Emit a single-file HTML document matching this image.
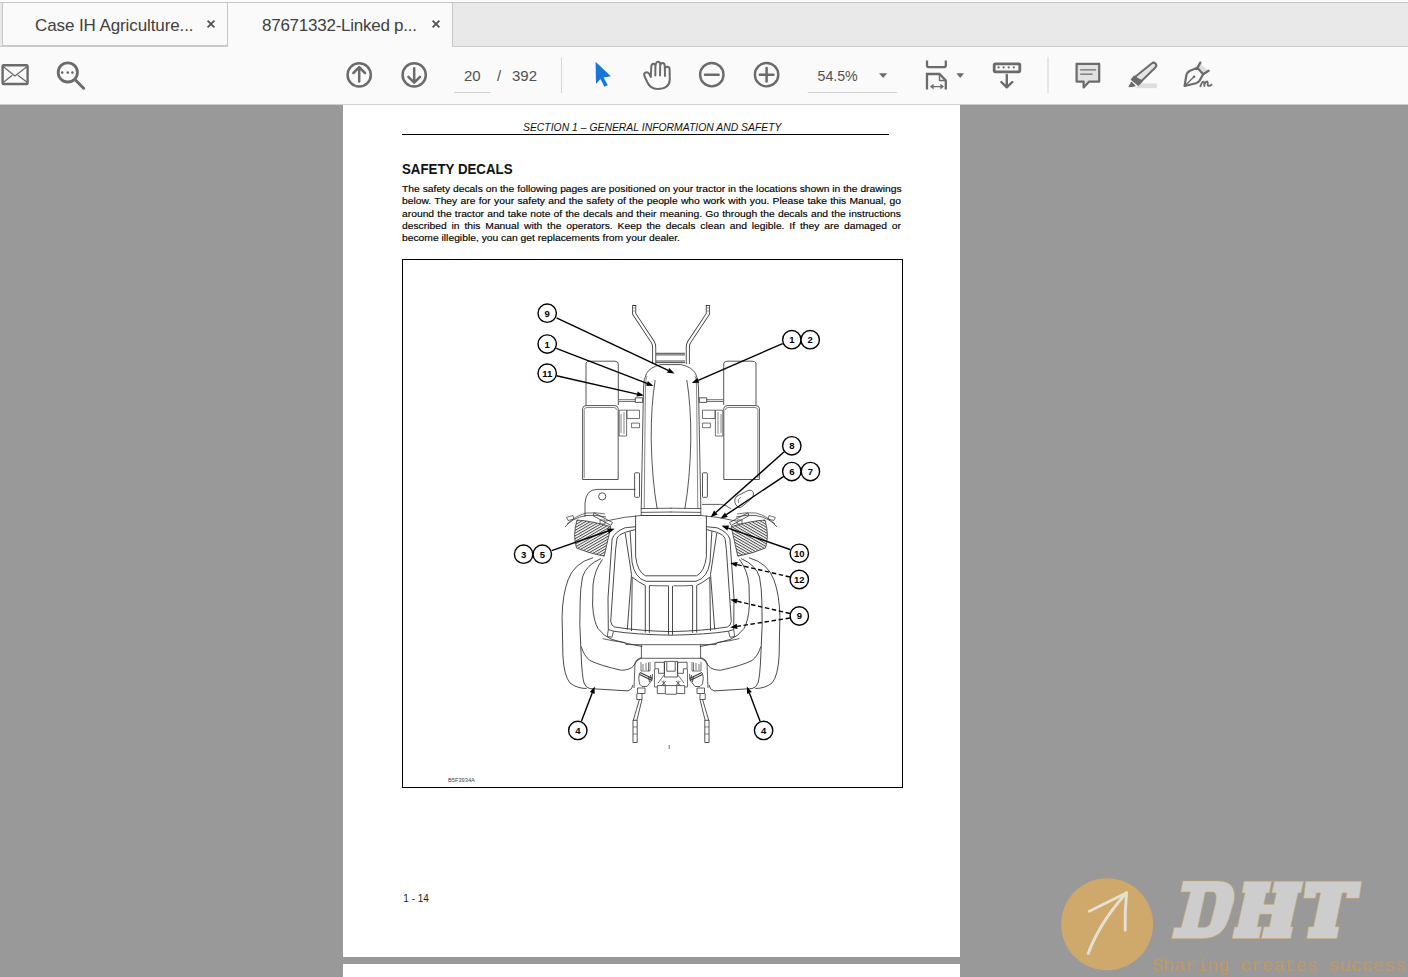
<!DOCTYPE html>
<html><head><meta charset="utf-8">
<style>
html,body{margin:0;padding:0;width:1408px;height:977px;overflow:hidden;background:#999999;font-family:"Liberation Sans",sans-serif;}
.abs{position:absolute;}
#tabbar{position:absolute;left:0;top:0;width:1408px;height:47px;background:#e9e9e9;}
#tabtop{position:absolute;left:0;top:0;width:1408px;height:2px;background:#fbfbfb;}
#tabline{position:absolute;left:0;top:2px;width:1408px;height:1px;background:#c6c6c6;}
#tabbot{position:absolute;left:0;top:46px;width:1408px;height:1px;background:#cccccc;}
.tab{position:absolute;top:2px;height:44px;background:#fafafa;border:1px solid #c6c6c6;box-sizing:border-box;}
.tabtxt{position:absolute;top:15.6px;font-size:17px;letter-spacing:-0.1px;color:#404040;white-space:nowrap;line-height:20px;}
.tabx{position:absolute;top:18.7px;width:10px;height:10px;}
#toolbar{position:absolute;left:0;top:47px;width:1408px;height:57px;background:#fafafa;}
#tbline{position:absolute;left:0;top:104px;width:1408px;height:1px;background:#cfcfcf;}
#page{position:absolute;left:343px;top:105px;width:617.4px;height:852.4px;background:#ffffff;}
#page2{position:absolute;left:343px;top:964.3px;width:617.4px;height:20px;background:#ffffff;}
.tbtxt{position:absolute;top:66.6px;font-size:15px;line-height:18px;color:#505050;white-space:nowrap;}
.ptxt{position:absolute;color:#000;white-space:nowrap;}
.body{position:absolute;left:402px;width:459.9px;font-size:9.5px;line-height:12.33px;color:#000;transform:scaleX(1.085);transform-origin:0 0;-webkit-text-stroke:0.15px #000;}
.body div{text-align:justify;text-align-last:justify;height:12.33px;white-space:nowrap;}
</style></head><body>
<div id="tabbar"></div>
<div id="tabtop"></div>
<div id="tabline"></div>
<div id="tabbot"></div>
<div class="tab" style="left:2px;width:226px;"></div>
<div class="tab" style="left:227px;width:226px;height:45px;border-bottom:none;"></div>
<div class="tabtxt" style="left:35px;">Case IH Agriculture...</div>
<div class="tabtxt" style="left:262px;letter-spacing:-0.25px;">87671332-Linked p...</div>
<svg class="tabx" style="left:206px" viewBox="0 0 10 10"><path d="M1.6 1.6L8.4 8.4M8.4 1.6L1.6 8.4" stroke="#555" stroke-width="1.9"/></svg>
<svg class="tabx" style="left:431px" viewBox="0 0 10 10"><path d="M1.6 1.6L8.4 8.4M8.4 1.6L1.6 8.4" stroke="#555" stroke-width="1.9"/></svg>
<div id="toolbar"></div>
<div id="tbline"></div>
<svg class="abs" style="left:0;top:0" width="1408" height="105" viewBox="0 0 1408 105">
<g fill="none" stroke="#6b6b6b" stroke-linecap="round" stroke-linejoin="round">
<!-- envelope -->
<rect x="2.6" y="65.2" width="25" height="18.8" rx="1" stroke-width="2.4"/>
<path d="M3.4,66.8 L14.9,76 L26.8,66.8" stroke-width="1.3"/>
<path d="M3.8,82 L11.9,75.6 M26.8,82 L18.1,75.6" stroke-width="1.3"/>
<!-- magnifier -->
<circle cx="67.8" cy="72.4" r="9.6" stroke-width="2.8"/>
<path d="M75.2,79.8 L83.6,88.2" stroke-width="3"/>
<!-- up / down -->
<circle cx="359.2" cy="74.9" r="11.6" stroke-width="2.5"/>
<path d="M359.2,81.5 L359.2,67.5 M353.4,73 L359.2,67.2 L365,73" stroke-width="2.5"/>
<circle cx="414.2" cy="74.9" r="11.6" stroke-width="2.5"/>
<path d="M414.2,68.3 L414.2,82.3 M408.4,76.8 L414.2,82.6 L420,76.8" stroke-width="2.5"/>
<!-- hand -->
<path d="M650.8,77 L651.3,66.2 Q651.8,63.6 653.6,63.7 Q655.5,63.9 655.4,66.5 L655.3,75.5 M655.5,66.5 L655.8,63.8 Q656.6,61.5 658.3,61.7 Q660.2,62 660.2,64.5 L660,75.5 M660.2,65.5 Q660.6,63 662.6,63.1 Q664.6,63.3 664.8,66 L665,76 M664.9,69 Q665.2,66.6 667.5,66.7 Q669.6,66.9 669.6,69.2 L669.8,79.5 Q669.5,89 657.3,89 Q650.5,89 647.2,82 L644.4,76 Q643.6,73.6 645.4,72.6 Q647.4,71.6 649.2,73.8 L650.8,77" stroke-width="2"/>
<!-- zoom out / in -->
<circle cx="711.8" cy="74.7" r="11.7" stroke-width="2.4"/>
<path d="M705,74.7 L718.6,74.7" stroke-width="2.5"/>
<circle cx="766.6" cy="74.7" r="11.7" stroke-width="2.4"/>
<path d="M759.8,74.7 L773.4,74.7 M766.6,67.9 L766.6,81.5" stroke-width="2.5"/>
<!-- fit page -->
<path d="M927,60.4 L927,65.6 Q927,67.2 928.6,67.2 L944.2,67.2 Q945.8,67.2 945.8,65.6 L945.8,60.4" stroke-width="2.3" stroke-linecap="butt"/>
<path d="M927,89.5 L927,74 L939.5,74 L945.8,80.5 L945.8,89.5" stroke-width="2.3" stroke-linecap="butt" stroke-linejoin="miter"/>
<path d="M939.5,74 L939.5,80.5 L945.8,80.5" stroke-width="1.4" stroke-linecap="butt"/>
<path d="M932,86.6 L942,86.6" stroke-width="1.4"/><path d="M930,86.6 L933.6,83.8 L933.6,89.4 Z M944,86.6 L940.4,83.8 L940.4,89.4 Z" fill="#6b6b6b" stroke="none"/>
<!-- read mode -->
<rect x="994.2" y="63.8" width="25.6" height="8" rx="1.2" stroke-width="2.8"/>
<path d="M1006.8,75 L1006.8,87.2 M1001.3,82 L1006.8,87.4 L1012.3,82" stroke-width="2.4"/>
<!-- comment -->
<path d="M1076.6,63.8 L1099.2,63.8 L1099.2,81.6 L1089.2,81.6 L1083.6,87.4 L1083.6,81.6 L1076.6,81.6 Z" fill="#e2e2e2" stroke-width="2.2"/>
<path d="M1080.6,69.9 L1095.6,69.9 M1080.6,74.1 L1092.2,74.1" stroke-width="1.2"/>
<!-- highlighter -->
<path d="M1137,83.5 L1156.8,83.5 L1156.8,88.2 L1137,88.2 Z" fill="#dddddd" stroke="none"/>
<path d="M1151.6,63.5 Q1153.6,61.8 1155.4,63.5 Q1157.2,65.4 1155.6,67.3 L1141.6,81 L1134.3,77.5 Z" fill="#e4e4e4" stroke-width="2"/>
<path d="M1134.2,76.2 L1141.8,81.8 L1138.4,85.2 L1131.3,79.6 Z" fill="#6b6b6b" stroke-width="1.2"/>
<path d="M1129.2,86.6 L1131.6,82.4 L1134.9,86 Z" fill="#6b6b6b" stroke-width="1.2"/>
<!-- sign -->
<path d="M1200.4,64 L1208,70.8 L1203.2,73.8 L1197.6,68 Z" fill="#dedede" stroke="none"/>
<path d="M1184.6,86 L1186.4,75 Q1187,72.6 1189.4,71 L1197.4,67.8 L1203.1,74.2 L1199.6,80.6 Q1198.4,82.4 1196,83.2 Z" stroke-width="2.2" stroke-linejoin="round"/>
<path d="M1197.4,67.8 L1200.3,62.6 M1203.1,74.2 L1208.6,70.8" stroke-width="2.3"/>
<path d="M1185.4,85.2 L1193.6,77.2" stroke-width="1.3"/>
<circle cx="1194" cy="76.8" r="1.3" fill="#6b6b6b" stroke="none"/>
<path d="M1200.4,86.2 Q1202.2,81.4 1203.4,81.6 Q1204.4,82 1204.4,86 M1204.6,84 Q1206,81.2 1207.2,81.6 Q1208,82.2 1207.8,85.4 Q1209.4,86.6 1211.6,84.6" stroke-width="1.9"/>
</g>
<g fill="#6b6b6b">
<circle cx="62.2" cy="72.6" r="1.3"/><circle cx="67.8" cy="72.6" r="1.3"/><circle cx="72.4" cy="72.6" r="1.3"/>
<circle cx="998.6" cy="67.4" r="1.1"/><circle cx="1003.6" cy="67.4" r="1.1"/><circle cx="1008.7" cy="67.4" r="1.1"/><circle cx="1013.8" cy="67.4" r="1.1"/>
<path d="M879,73.2 L887.2,73.2 L883.1,78 Z"/>
<path d="M956.4,73.2 L964,73.2 L960.2,78 Z"/>
</g>
<path d="M595.6,61.8 L610.8,76.2 L603.6,77.4 L607.8,85.2 L604.4,86.8 L600.4,79 L596,84 Z" fill="#1976d9"/>
<rect x="561" y="58" width="1" height="35" fill="#d4d4d4"/>
<rect x="1047.5" y="57" width="1" height="36" fill="#d4d4d4"/>
<rect x="454" y="92" width="36.5" height="1" fill="#cfcfcf"/>
<rect x="807.7" y="92" width="89.3" height="1" fill="#cfcfcf"/>
</svg>
<div class="tbtxt" style="left:464px;">20</div>
<div class="tbtxt" style="left:497px;">/</div>
<div class="tbtxt" style="left:512px;">392</div>
<div class="tbtxt" style="left:817.5px;font-size:14.2px;">54.5%</div>

<div id="page"></div>
<div id="page2"></div>

<!-- page content -->
<div class="ptxt" style="left:523px;top:122px;font-size:10.4px;font-style:italic;line-height:12px;color:#111;">SECTION 1 – GENERAL INFORMATION AND SAFETY</div>
<div class="abs" style="left:402px;top:133.5px;width:487px;height:1.4px;background:#000;"></div>
<div class="ptxt" style="left:402px;top:160.6px;font-size:14.1px;font-weight:bold;line-height:16px;color:#111;transform:scaleX(0.943);transform-origin:0 0;">SAFETY DECALS</div>
<div class="body" style="top:183px;">
<div>The safety decals on the following pages are positioned on your tractor in the locations shown in the drawings</div>
<div>below. They are for your safety and the safety of the people who work with you. Please take this Manual, go</div>
<div>around the tractor and take note of the decals and their meaning. Go through the decals and the instructions</div>
<div>described in this Manual with the operators. Keep the decals clean and legible. If they are damaged or</div>
<div style="text-align:left;text-align-last:left;">become illegible, you can get replacements from your dealer.</div>
</div>
<div class="abs" style="left:402px;top:259px;width:501px;height:529px;border:1.2px solid #000;box-sizing:border-box;"></div>
<!--DIAGRAM--><svg class="abs" style="left:402px;top:259px" width="501" height="529" viewBox="402 259 501 529"><defs><pattern id="hatch" width="2.4" height="2.4" patternUnits="userSpaceOnUse" patternTransform="rotate(60)"><rect width="2.4" height="2.4" fill="#fff"/><rect width="1.0" height="2.4" fill="#4a4a4a"/></pattern></defs><g fill="none" stroke="#363636" stroke-width="0.85" stroke-linejoin="round">
<!-- handle left -->
<path d="M634.2,305 L634.2,314 L652.8,342 Q654.2,344.5 654.2,347 L654.2,364" stroke="#363636" stroke-width="4" fill="none" stroke-linejoin="miter"/>
<path d="M634.2,305.9 L634.2,314 L652.8,342 Q654.2,344.5 654.2,347 L654.2,364" stroke="#fff" stroke-width="2.3" fill="none" stroke-linejoin="miter"/>
<path d="M632.4,308 h3.6 M632.4,311 h3.6" stroke="#666" stroke-width="0.6"/>
<!-- front wheel upper -->
<path d="M586,405 L586,363 Q587,361.2 590,361.2 L615,361.2 Q618.3,361.4 618.3,364 L618.3,405" />
<!-- front wheel lower -->
<path d="M582.6,479.5 L582.6,408.5 Q582.8,405.8 586,405.6 L614.8,405.6 Q618,405.8 618.2,408.5 L618.2,479.5 Z" />
<path d="M584.2,478 L584.2,409.5 Q584.5,407.5 587,407.5 L614,407.5 Q616.5,407.6 616.6,410" stroke-width="0.6"/>
<!-- axle -->
<path d="M618.7,399.7 L635.3,399.7 M618.7,401.5 L635.3,401.5" stroke-width="0.7"/>
<rect x="635.3" y="397.8" width="7.4" height="4.6"/>
<rect x="619.2" y="410.2" width="7.4" height="25.8" stroke-width="0.7"/>
<rect x="627" y="410.2" width="12.5" height="8.3" stroke-width="0.7"/>
<rect x="631.6" y="423.1" width="7.9" height="4.6" stroke-width="0.7"/>
<path d="M621,414 L621,433 M624,412 L624,434" stroke-width="0.6"/>
<!-- hood left outer lines -->
<path d="M671,364.6 L661,364.6 Q650,367 646.5,373.5 Q643.5,379 643.5,388 L641.2,509" />
<path d="M647,376.2 Q645.3,380 645.4,390 L644.2,509" stroke-width="0.6"/>
<path d="M655.2,380 Q651,405 651.2,440 Q652,480 657.2,509" />
<!-- side rect -->
<rect x="634.6" y="472.8" width="4.9" height="24.5" rx="0.8"/>
<!-- hood bottom -->
<path d="M641.2,508.6 L671.5,508.2 M641.2,512.4 L671.5,512 M641.2,508.6 L641.2,515.5 L671.5,515.5" stroke-width="0.8"/>
<!-- mirror arms -->
<path d="M565,527 Q572,518 586,515.5 Q596,514.5 606,517" stroke-width="0.8"/>
<path d="M567,524 Q575,516 586,513 Q597,512.2 605,514" stroke-width="0.7"/>
<path d="M566.6,517.4 L573,515.5 L574,519 L568,520.5 Z" stroke-width="0.7"/>
<path d="M594,512.8 L612.5,522.5 L610.8,525.4 L593.2,515.8 Z" stroke-width="0.8"/>
<rect x="600" y="520" width="5" height="4" stroke-width="0.7"/>
<!-- grille -->
<path d="M577,520 Q592,521 610.8,526.7 L604.2,556.2 Q588,553 576.5,548 Q572.5,535 577,520 Z" fill="url(#hatch)" stroke-width="0.8"/>
<!-- line from plate to cab -->
<path d="M606,521 Q625,516.5 641.2,515.5 L671.5,515.5" stroke-width="0.8"/>
<!-- cab roof U -->
<path d="M635.6,515.5 L635.6,556.5 Q637.5,572 645.5,575.8 L671,575.8" stroke-width="0.9"/>
<path d="M630.1,531.2 L632,562 Q634.5,578 646,581.3 L671,581.3" stroke-width="0.9"/>
<!-- cab outer frame -->
<path d="M635.6,526.7 L625,527.8 Q614.5,532 612.1,539 L608,598 L608.3,629.5 L613.5,631.2 Q635,634.5 671,635.2" stroke-width="0.9"/>
<path d="M635.6,529.5 L625.2,532.3 Q618,535 617,538.5 L615.6,549.6 L610.7,621.4 Q611.5,626.2 614.6,627 Q640,631 671,631.6" stroke-width="0.9"/>
<path d="M625.2,533 L631.5,574.4 L627.3,629.5" stroke-width="0.9"/>
<path d="M632.2,577.2 Q639,582.5 645.3,585.5 L645.3,632.6 M649.4,585.5 L649.4,632.9 M632.2,577.2 L631.5,631" stroke-width="0.9"/>
<path d="M649.4,585.5 Q660,586 668.5,585.8" stroke-width="0.8"/>
<path d="M608.3,629.5 L607.3,636.5 L612,637.2 L613.5,631.2" stroke-width="0.8"/>
<!-- rear tire -->
<path d="M593.1,557.7 Q574,563 568,580 Q562.5,595 562.1,616.4 L562.9,656 Q564,676 570,683 Q577,688.5 586.7,688.5" stroke-width="0.9"/>
<path d="M601,558.5 Q586,565 582.5,577 Q580.2,590 580.2,600 L579.8,624.3 L581.2,656 Q582,676 584,683 Q586,688 590,688.6 L628,690.9 Q632.2,689.7 633,685" stroke-width="0.9"/>
<path d="M602.6,559.3 Q594.5,570 593,585 L592.6,605 Q593.5,621 598,628.5 Q604,636.5 612,639.5 Q627,644 642.2,646.5" stroke-width="0.9"/>
<path d="M581.2,646.5 Q584,656 590,660.5 Q600,665.6 621.6,670.3 Q630,670 633.5,666 Q636,660.5 641.4,657.6" stroke-width="0.9"/>
<!-- cab bottom / hitch left -->
<path d="M602.6,638.6 Q612,641 624.8,642.5 L626,644.5 L642.1,644.7 L671,644.7" stroke-width="0.8"/>
<path d="M641.4,644.7 L641.4,658.3 M639.2,658.3 L671,658.3 M639.2,658.3 Q636,659.5 635,663 L634,688" stroke-width="0.8"/>
<path d="M654.9,662.3 L664.4,662.3 L664.4,673.3 L658.6,673.3 L658.6,668.8 L654.9,668.8 Z" stroke-width="0.8"/>
<path d="M664.4,661.4 L671,661.4 M664.4,677 L671,677 M664.4,661.4 L664.4,677 M666.8,662 L666.8,671.2 L671,671.2" stroke-width="0.8"/>
<path d="M657.3,685.6 L657.3,693.6 L665.3,693.6 L665.3,685.6 Z M665.3,694.2 L671,694.2 M665.3,685.6 L671,685.6" stroke-width="0.8"/>
<path d="M657.9,683.2 L664.4,674.6" stroke-width="0.7"/>
<path d="M661.6,681 L666,685.4 M666,681 L661.6,685.4 M663.8,680.6 L663.8,685.8" stroke-width="0.7"/>
<path d="M654.5,669 L654.5,687 L657.3,687" stroke-width="0.7"/>
<!-- link mechanism -->
<path d="M641,662 L641,671 L650,671 L650,662 M643,664 L643,670 M646,663 L646,670 M648.5,662.5 L648.5,671" stroke-width="0.7"/>
<path d="M640,672.5 L652.5,678.5 M639.5,674.5 L651,680" stroke-width="1.1"/>
<path d="M639.5,673 Q638,678 639.5,684 L642,686.5 L647,686.5 L652,680 L652.5,674" stroke-width="0.8"/>
<path d="M648.5,676 L649.5,682 M650.5,675 L651.5,681" stroke-width="0.9"/>
<path d="M637.5,688 L645,688 L645,693.5 L637.5,693.5 Z" stroke-width="0.8"/>
<path d="M636.8,693.5 L636.8,699.5 L642,699.5 L642,693.5" stroke-width="0.8"/>
<!-- lower link left -->
<path d="M639.4,699.5 L633.2,720.6 M642,699.5 L636.8,720.6" stroke-width="0.85"/>
<rect x="633" y="720.3" width="4.2" height="22.2" stroke-width="0.85"/>
<path d="M633,727 h4.2 M633,734 h4.2" stroke-width="0.6"/>
</g><g fill="none" stroke="#363636" stroke-width="0.85" stroke-linejoin="round"><g transform="translate(1342.0,0) scale(-1,1)">
<!-- handle left -->
<path d="M634.2,305 L634.2,314 L652.8,342 Q654.2,344.5 654.2,347 L654.2,364" stroke="#363636" stroke-width="4" fill="none" stroke-linejoin="miter"/>
<path d="M634.2,305.9 L634.2,314 L652.8,342 Q654.2,344.5 654.2,347 L654.2,364" stroke="#fff" stroke-width="2.3" fill="none" stroke-linejoin="miter"/>
<path d="M632.4,308 h3.6 M632.4,311 h3.6" stroke="#666" stroke-width="0.6"/>
<!-- front wheel upper -->
<path d="M586,405 L586,363 Q587,361.2 590,361.2 L615,361.2 Q618.3,361.4 618.3,364 L618.3,405" />
<!-- front wheel lower -->
<path d="M582.6,479.5 L582.6,408.5 Q582.8,405.8 586,405.6 L614.8,405.6 Q618,405.8 618.2,408.5 L618.2,479.5 Z" />
<path d="M584.2,478 L584.2,409.5 Q584.5,407.5 587,407.5 L614,407.5 Q616.5,407.6 616.6,410" stroke-width="0.6"/>
<!-- axle -->
<path d="M618.7,399.7 L635.3,399.7 M618.7,401.5 L635.3,401.5" stroke-width="0.7"/>
<rect x="635.3" y="397.8" width="7.4" height="4.6"/>
<rect x="619.2" y="410.2" width="7.4" height="25.8" stroke-width="0.7"/>
<rect x="627" y="410.2" width="12.5" height="8.3" stroke-width="0.7"/>
<rect x="631.6" y="423.1" width="7.9" height="4.6" stroke-width="0.7"/>
<path d="M621,414 L621,433 M624,412 L624,434" stroke-width="0.6"/>
<!-- hood left outer lines -->
<path d="M671,364.6 L661,364.6 Q650,367 646.5,373.5 Q643.5,379 643.5,388 L641.2,509" />
<path d="M647,376.2 Q645.3,380 645.4,390 L644.2,509" stroke-width="0.6"/>
<path d="M655.2,380 Q651,405 651.2,440 Q652,480 657.2,509" />
<!-- side rect -->
<rect x="634.6" y="472.8" width="4.9" height="24.5" rx="0.8"/>
<!-- hood bottom -->
<path d="M641.2,508.6 L671.5,508.2 M641.2,512.4 L671.5,512 M641.2,508.6 L641.2,515.5 L671.5,515.5" stroke-width="0.8"/>
<!-- mirror arms -->
<path d="M565,527 Q572,518 586,515.5 Q596,514.5 606,517" stroke-width="0.8"/>
<path d="M567,524 Q575,516 586,513 Q597,512.2 605,514" stroke-width="0.7"/>
<path d="M566.6,517.4 L573,515.5 L574,519 L568,520.5 Z" stroke-width="0.7"/>
<path d="M594,512.8 L612.5,522.5 L610.8,525.4 L593.2,515.8 Z" stroke-width="0.8"/>
<rect x="600" y="520" width="5" height="4" stroke-width="0.7"/>
<!-- grille -->
<path d="M577,520 Q592,521 610.8,526.7 L604.2,556.2 Q588,553 576.5,548 Q572.5,535 577,520 Z" fill="url(#hatch)" stroke-width="0.8"/>
<!-- line from plate to cab -->
<path d="M606,521 Q625,516.5 641.2,515.5 L671.5,515.5" stroke-width="0.8"/>
<!-- cab roof U -->
<path d="M635.6,515.5 L635.6,556.5 Q637.5,572 645.5,575.8 L671,575.8" stroke-width="0.9"/>
<path d="M630.1,531.2 L632,562 Q634.5,578 646,581.3 L671,581.3" stroke-width="0.9"/>
<!-- cab outer frame -->
<path d="M635.6,526.7 L625,527.8 Q614.5,532 612.1,539 L608,598 L608.3,629.5 L613.5,631.2 Q635,634.5 671,635.2" stroke-width="0.9"/>
<path d="M635.6,529.5 L625.2,532.3 Q618,535 617,538.5 L615.6,549.6 L610.7,621.4 Q611.5,626.2 614.6,627 Q640,631 671,631.6" stroke-width="0.9"/>
<path d="M625.2,533 L631.5,574.4 L627.3,629.5" stroke-width="0.9"/>
<path d="M632.2,577.2 Q639,582.5 645.3,585.5 L645.3,632.6 M649.4,585.5 L649.4,632.9 M632.2,577.2 L631.5,631" stroke-width="0.9"/>
<path d="M649.4,585.5 Q660,586 668.5,585.8" stroke-width="0.8"/>
<path d="M608.3,629.5 L607.3,636.5 L612,637.2 L613.5,631.2" stroke-width="0.8"/>
<!-- rear tire -->
<path d="M593.1,557.7 Q574,563 568,580 Q562.5,595 562.1,616.4 L562.9,656 Q564,676 570,683 Q577,688.5 586.7,688.5" stroke-width="0.9"/>
<path d="M601,558.5 Q586,565 582.5,577 Q580.2,590 580.2,600 L579.8,624.3 L581.2,656 Q582,676 584,683 Q586,688 590,688.6 L628,690.9 Q632.2,689.7 633,685" stroke-width="0.9"/>
<path d="M602.6,559.3 Q594.5,570 593,585 L592.6,605 Q593.5,621 598,628.5 Q604,636.5 612,639.5 Q627,644 642.2,646.5" stroke-width="0.9"/>
<path d="M581.2,646.5 Q584,656 590,660.5 Q600,665.6 621.6,670.3 Q630,670 633.5,666 Q636,660.5 641.4,657.6" stroke-width="0.9"/>
<!-- cab bottom / hitch left -->
<path d="M602.6,638.6 Q612,641 624.8,642.5 L626,644.5 L642.1,644.7 L671,644.7" stroke-width="0.8"/>
<path d="M641.4,644.7 L641.4,658.3 M639.2,658.3 L671,658.3 M639.2,658.3 Q636,659.5 635,663 L634,688" stroke-width="0.8"/>
<path d="M654.9,662.3 L664.4,662.3 L664.4,673.3 L658.6,673.3 L658.6,668.8 L654.9,668.8 Z" stroke-width="0.8"/>
<path d="M664.4,661.4 L671,661.4 M664.4,677 L671,677 M664.4,661.4 L664.4,677 M666.8,662 L666.8,671.2 L671,671.2" stroke-width="0.8"/>
<path d="M657.3,685.6 L657.3,693.6 L665.3,693.6 L665.3,685.6 Z M665.3,694.2 L671,694.2 M665.3,685.6 L671,685.6" stroke-width="0.8"/>
<path d="M657.9,683.2 L664.4,674.6" stroke-width="0.7"/>
<path d="M661.6,681 L666,685.4 M666,681 L661.6,685.4 M663.8,680.6 L663.8,685.8" stroke-width="0.7"/>
<path d="M654.5,669 L654.5,687 L657.3,687" stroke-width="0.7"/>
<!-- link mechanism -->
<path d="M641,662 L641,671 L650,671 L650,662 M643,664 L643,670 M646,663 L646,670 M648.5,662.5 L648.5,671" stroke-width="0.7"/>
<path d="M640,672.5 L652.5,678.5 M639.5,674.5 L651,680" stroke-width="1.1"/>
<path d="M639.5,673 Q638,678 639.5,684 L642,686.5 L647,686.5 L652,680 L652.5,674" stroke-width="0.8"/>
<path d="M648.5,676 L649.5,682 M650.5,675 L651.5,681" stroke-width="0.9"/>
<path d="M637.5,688 L645,688 L645,693.5 L637.5,693.5 Z" stroke-width="0.8"/>
<path d="M636.8,693.5 L636.8,699.5 L642,699.5 L642,693.5" stroke-width="0.8"/>
<!-- lower link left -->
<path d="M639.4,699.5 L633.2,720.6 M642,699.5 L636.8,720.6" stroke-width="0.85"/>
<rect x="633" y="720.3" width="4.2" height="22.2" stroke-width="0.85"/>
<path d="M633,727 h4.2 M633,734 h4.2" stroke-width="0.6"/>
</g></g><g fill="none" stroke="#363636" stroke-width="0.85">
<path d="M668.5,585.8 L668.5,634.8 M672.5,585.8 L672.5,634.8" stroke-width="0.9"/>
<path d="M656,353.3 L685,353.3 M656,354.9 L685,354.9 M656,361 L685,361 M656,362.6 L685,362.6" stroke-width="0.9"/>
<path d="M669.2,745 L669.2,749" stroke-width="0.7"/>
<!-- cab front plate left -->
<path d="M585,517 L585,503 Q586,489.4 597,489.4 L635.3,489.4"/>
<circle cx="602.2" cy="496.4" r="3.6"/>

<!-- pill (exhaust) right -->
<path d="M736,505 Q733,500 737,496 L748,490.5 Q752.5,489.5 753.5,493 Q754,497 750.5,499.5 L741,507.4 Q738,508.5 736,505 Z" stroke-width="0.8"/>
<path d="M738.5,503 Q737,499 741,497" stroke-width="0.6"/>
<path d="M702,504.4 L720.5,504.4 Q727,505 731,509" stroke-width="0.8"/>
</g><path d="M556.5,317.8 L668.2,370.4" stroke="#000" stroke-width="1.4"/><path d="M674.5,373.4 L667.1,372.8 L669.3,368.1 Z" fill="#000"/><circle cx="547.2" cy="313.2" r="9.2" fill="#fff" stroke="#000" stroke-width="1.4"/><text x="547.2" y="316.6" text-anchor="middle" font-family="Liberation Sans" font-weight="bold" font-size="9.5" fill="#000">9</text><path d="M556.3,348.3 L647.0,383.4" stroke="#000" stroke-width="1.4"/><path d="M653.5,385.9 L646.0,385.8 L647.9,380.9 Z" fill="#000"/><circle cx="547.2" cy="344.1" r="9.2" fill="#fff" stroke="#000" stroke-width="1.4"/><text x="547.2" y="347.5" text-anchor="middle" font-family="Liberation Sans" font-weight="bold" font-size="9.5" fill="#000">1</text><path d="M556.5,375.8 L637.1,394.1" stroke="#000" stroke-width="1.4"/><path d="M643.9,395.6 L636.5,396.6 L637.6,391.5 Z" fill="#000"/><circle cx="547.2" cy="373.2" r="9.2" fill="#fff" stroke="#000" stroke-width="1.4"/><text x="547.2" y="376.6" text-anchor="middle" font-family="Liberation Sans" font-weight="bold" font-size="9.5" fill="#000">11</text><path d="M782.6,343.6 L698.2,380.3" stroke="#000" stroke-width="1.4"/><path d="M691.8,383.1 L697.2,377.9 L699.3,382.7 Z" fill="#000"/><circle cx="791.8" cy="339.7" r="9.2" fill="#fff" stroke="#000" stroke-width="1.4"/><text x="791.8" y="343.1" text-anchor="middle" font-family="Liberation Sans" font-weight="bold" font-size="9.5" fill="#000">1</text><circle cx="810.2" cy="339.7" r="9.2" fill="#fff" stroke="#000" stroke-width="1.4"/><text x="810.2" y="343.1" text-anchor="middle" font-family="Liberation Sans" font-weight="bold" font-size="9.5" fill="#000">2</text><path d="M784.5,451.5 L715.8,512.5" stroke="#000" stroke-width="1.4"/><path d="M710.6,517.2 L714.1,510.6 L717.6,514.5 Z" fill="#000"/><circle cx="791.8" cy="445.8" r="9.2" fill="#fff" stroke="#000" stroke-width="1.4"/><text x="791.8" y="449.2" text-anchor="middle" font-family="Liberation Sans" font-weight="bold" font-size="9.5" fill="#000">8</text><path d="M783.8,476.3 L726.3,514.7" stroke="#000" stroke-width="1.4"/><path d="M720.5,518.6 L724.9,512.5 L727.8,516.9 Z" fill="#000"/><circle cx="791.8" cy="471.6" r="9.2" fill="#fff" stroke="#000" stroke-width="1.4"/><text x="791.8" y="475.0" text-anchor="middle" font-family="Liberation Sans" font-weight="bold" font-size="9.5" fill="#000">6</text><circle cx="810.4" cy="471.6" r="9.2" fill="#fff" stroke="#000" stroke-width="1.4"/><text x="810.4" y="475.0" text-anchor="middle" font-family="Liberation Sans" font-weight="bold" font-size="9.5" fill="#000">7</text><path d="M551.7,550.6 L608.0,531.0" stroke="#000" stroke-width="1.4"/><path d="M614.6,528.7 L608.8,533.5 L607.1,528.5 Z" fill="#000"/><circle cx="523.6" cy="554.2" r="9.2" fill="#fff" stroke="#000" stroke-width="1.4"/><text x="523.6" y="557.6" text-anchor="middle" font-family="Liberation Sans" font-weight="bold" font-size="9.5" fill="#000">3</text><circle cx="542.3" cy="554.2" r="9.2" fill="#fff" stroke="#000" stroke-width="1.4"/><text x="542.3" y="557.6" text-anchor="middle" font-family="Liberation Sans" font-weight="bold" font-size="9.5" fill="#000">5</text><path d="M790.0,549.5 L728.2,528.1" stroke="#000" stroke-width="1.4"/><path d="M721.6,525.8 L729.1,525.6 L727.4,530.5 Z" fill="#000"/><circle cx="799.3" cy="553.3" r="9.2" fill="#fff" stroke="#000" stroke-width="1.4"/><text x="799.3" y="556.7" text-anchor="middle" font-family="Liberation Sans" font-weight="bold" font-size="9.5" fill="#000">10</text><path d="M790.0,577.0 L737.0,564.6" stroke="#000" stroke-width="1.4" stroke-dasharray="4.5,2.6"/><path d="M730.2,563.0 L737.6,562.1 L736.4,567.1 Z" fill="#000"/><circle cx="799.3" cy="579.5" r="9.2" fill="#fff" stroke="#000" stroke-width="1.4"/><text x="799.3" y="582.9" text-anchor="middle" font-family="Liberation Sans" font-weight="bold" font-size="9.5" fill="#000">12</text><path d="M790.0,613.5 L737.0,601.2" stroke="#000" stroke-width="1.4" stroke-dasharray="4.5,2.6"/><path d="M730.2,599.6 L737.6,598.7 L736.4,603.7 Z" fill="#000"/><path d="M790.0,618.0 L737.1,626.4" stroke="#000" stroke-width="1.4" stroke-dasharray="4.5,2.6"/><path d="M730.2,627.5 L736.7,623.8 L737.5,629.0 Z" fill="#000"/><circle cx="799.3" cy="616.0" r="9.2" fill="#fff" stroke="#000" stroke-width="1.4"/><text x="799.3" y="619.4" text-anchor="middle" font-family="Liberation Sans" font-weight="bold" font-size="9.5" fill="#000">9</text><path d="M581.5,721.0 L592.2,693.0" stroke="#000" stroke-width="1.4"/><path d="M594.7,686.5 L594.6,694.0 L589.8,692.1 Z" fill="#000"/><circle cx="577.8" cy="730.4" r="9.2" fill="#fff" stroke="#000" stroke-width="1.4"/><text x="577.8" y="733.8" text-anchor="middle" font-family="Liberation Sans" font-weight="bold" font-size="9.5" fill="#000">4</text><path d="M760.0,721.0 L749.4,693.0" stroke="#000" stroke-width="1.4"/><path d="M746.9,686.5 L751.8,692.1 L747.0,694.0 Z" fill="#000"/><circle cx="763.6" cy="730.4" r="9.2" fill="#fff" stroke="#000" stroke-width="1.4"/><text x="763.6" y="733.8" text-anchor="middle" font-family="Liberation Sans" font-weight="bold" font-size="9.5" fill="#000">4</text></svg><!--/DIAGRAM-->
<div class="ptxt" style="left:448px;top:776px;font-size:5.7px;line-height:8px;color:#444;">B5F3934A</div>
<div class="ptxt" style="left:403.3px;top:892.6px;font-size:10px;line-height:12px;color:#1a1a1a;">1 - 14</div>

<svg class="abs" style="left:1040px;top:860px" width="368" height="117" viewBox="1040 860 368 117">
<circle cx="1107.1" cy="924.3" r="46" fill="#cfa86c"/>
<path d="M1088.2,953.5 Q1100,922 1126.6,892.8" fill="none" stroke="#e6e0d2" stroke-width="2.9" stroke-linecap="round"/>
<path d="M1089.3,911.2 L1126.6,892.8 Q1124.6,912 1125.2,930.2" fill="none" stroke="#e6e0d2" stroke-width="2.9" stroke-linecap="round" stroke-linejoin="round"/>
<g transform="translate(1160,870) scale(0.17615)" fill="#cdcdcd" stroke="#c9a463" stroke-width="3.5">
<path fill-rule="evenodd" d="M130,62 L330,62 Q440,62 420,180 L390,280 Q355,390 240,390 L65,390 L80,325 L120,325 L172,125 L117,125 Z M258,125 L302,125 Q328,128 314,195 L287,298 Q278,325 252,325 L215,325 Z"/>
</g>
<g transform="translate(1230,875) scale(0.09943)" fill="#cdcdcd" stroke="#c9a463" stroke-width="6">
<path fill-rule="evenodd" d="M140,62 L740,62 L715,180 L685,180 L610,520 L635,520 L610,640 L20,640 L45,520 L75,520 L150,180 L120,180 Z M420,62 L445,62 L420,180 L465,180 L440,295 L340,295 L365,180 L395,180 Z M300,395 L420,395 L395,520 L340,520 L315,640 L295,640 L320,520 L275,520 Z"/>
<path d="M760,62 L1325,62 L1300,235 L1165,235 L1175,180 L1130,180 L1060,520 L1100,520 L1075,640 L770,640 L790,520 L840,520 L910,180 L870,180 L860,235 L740,235 Z"/>
</g>
</svg>
<div class="abs" style="left:1152px;top:955.5px;font-family:'Liberation Mono',monospace;font-size:18.4px;line-height:22px;color:#c39a5e;white-space:nowrap;opacity:0.9;">Sharing creates success</div>
</body></html>
